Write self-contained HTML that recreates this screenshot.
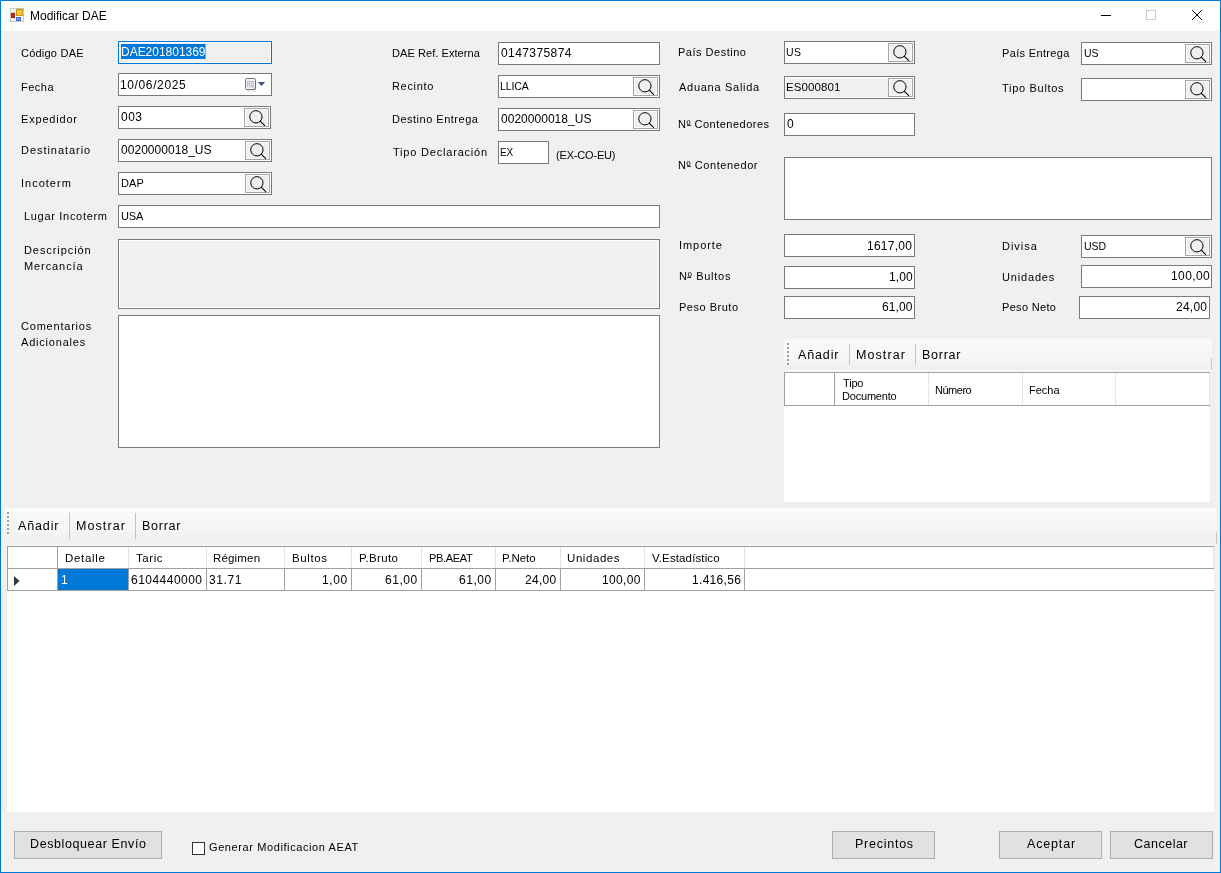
<!DOCTYPE html>
<html><head><meta charset="utf-8"><title>Modificar DAE</title>
<style>
html,body{margin:0;padding:0;width:1221px;height:873px;overflow:hidden;background:#f0f0f0;}
body>div,body>svg{position:absolute;box-sizing:border-box;}
.t{will-change:transform;font-family:"Liberation Sans", sans-serif;line-height:20px;white-space:pre;}
</style></head><body>
<div style="left:0;top:0;width:1221px;height:873px;box-sizing:border-box;border:1px solid #0078d7;background:#f0f0f0"></div>
<div style="left:1px;top:1px;width:1219px;height:30px;background:#fff;"></div>
<svg style="position:absolute;left:9px;top:7px" width="16" height="16" viewBox="0 0 16 16"><rect x="1.5" y="1.5" width="13" height="13" fill="#fff" stroke="#c4c4c4"/><path d="M1 5.5H15M1 10.5H15M5.5 1V15" stroke="#e0e0e0"/><rect x="7.5" y="2.5" width="6" height="6" fill="#f7c93a" stroke="#c9980f"/><rect x="2.5" y="6.5" width="3" height="4" fill="#d0321f" stroke="#9c1b10"/><rect x="7.5" y="10.5" width="4" height="3" fill="#6c9ae6" stroke="#3f6fc4"/></svg>
<div class="t" style="left:30.00px;top:5.84px;font-size:12px;letter-spacing:0.000px;color:#000;font-weight:normal;">Modificar DAE</div>
<div style="left:1101px;top:15px;width:10px;height:1px;background:#000;"></div>
<div style="left:1146px;top:10px;width:10px;height:10px;background:transparent;border:1px solid #cccccc;box-sizing:border-box;width:10px;height:10px;"></div>
<svg style="position:absolute;left:1191px;top:9px" width="12" height="12" viewBox="0 0 12 12"><path d="M1 1L11 11M11 1L1 11" stroke="#000" stroke-width="1"/></svg>
<div class="t" style="left:20.50px;top:43.19px;font-size:11px;letter-spacing:0.222px;color:#000;font-weight:normal;">Código DAE</div>
<div class="t" style="left:20.50px;top:77.19px;font-size:11px;letter-spacing:0.500px;color:#000;font-weight:normal;">Fecha</div>
<div class="t" style="left:20.60px;top:109.19px;font-size:11px;letter-spacing:0.812px;color:#000;font-weight:normal;">Expedidor</div>
<div class="t" style="left:20.60px;top:140.19px;font-size:11px;letter-spacing:0.955px;color:#000;font-weight:normal;">Destinatario</div>
<div class="t" style="left:20.60px;top:173.19px;font-size:11px;letter-spacing:1.000px;color:#000;font-weight:normal;">Incoterm</div>
<div class="t" style="left:24.20px;top:206.19px;font-size:11px;letter-spacing:0.692px;color:#000;font-weight:normal;">Lugar Incoterm</div>
<div class="t" style="left:24.30px;top:240.19px;font-size:11px;letter-spacing:0.920px;color:#000;font-weight:normal;">Descripción</div>
<div class="t" style="left:24.30px;top:256.19px;font-size:11px;letter-spacing:0.912px;color:#000;font-weight:normal;">Mercancía</div>
<div class="t" style="left:20.60px;top:316.19px;font-size:11px;letter-spacing:0.790px;color:#000;font-weight:normal;">Comentarios</div>
<div class="t" style="left:21.30px;top:332.19px;font-size:11px;letter-spacing:0.800px;color:#000;font-weight:normal;">Adicionales</div>
<div class="t" style="left:392.40px;top:43.19px;font-size:11px;letter-spacing:0.067px;color:#000;font-weight:normal;">DAE Ref. Externa</div>
<div class="t" style="left:392.40px;top:76.19px;font-size:11px;letter-spacing:0.667px;color:#000;font-weight:normal;">Recinto</div>
<div class="t" style="left:392.40px;top:109.19px;font-size:11px;letter-spacing:0.500px;color:#000;font-weight:normal;">Destino Entrega</div>
<div class="t" style="left:393.00px;top:142.19px;font-size:11px;letter-spacing:0.800px;color:#000;font-weight:normal;">Tipo Declaración</div>
<div class="t" style="left:556.00px;top:145.19px;font-size:11px;letter-spacing:-0.178px;color:#000;font-weight:normal;">(EX-CO-EU)</div>
<div class="t" style="left:677.70px;top:42.19px;font-size:11px;letter-spacing:0.500px;color:#000;font-weight:normal;">País Destino</div>
<div class="t" style="left:678.90px;top:77.19px;font-size:11px;letter-spacing:0.717px;color:#000;font-weight:normal;">Aduana Salida</div>
<div class="t" style="left:678.40px;top:114.19px;font-size:11px;letter-spacing:0.500px;color:#000;font-weight:normal;">Nº Contenedores</div>
<div style="left:687px;top:125px;width:4px;height:1px;background:#333;"></div>
<div class="t" style="left:677.70px;top:155.19px;font-size:11px;letter-spacing:0.583px;color:#000;font-weight:normal;">Nº Contenedor</div>
<div style="left:687px;top:166px;width:4px;height:1px;background:#333;"></div>
<div class="t" style="left:678.60px;top:235.19px;font-size:11px;letter-spacing:0.933px;color:#000;font-weight:normal;">Importe</div>
<div class="t" style="left:678.60px;top:266.19px;font-size:11px;letter-spacing:0.725px;color:#000;font-weight:normal;">Nº Bultos</div>
<div style="left:687px;top:277px;width:4px;height:1px;background:#333;"></div>
<div class="t" style="left:678.60px;top:297.19px;font-size:11px;letter-spacing:0.511px;color:#000;font-weight:normal;">Peso Bruto</div>
<div class="t" style="left:1001.50px;top:43.19px;font-size:11px;letter-spacing:0.345px;color:#000;font-weight:normal;">País Entrega</div>
<div class="t" style="left:1002.00px;top:78.19px;font-size:11px;letter-spacing:0.700px;color:#000;font-weight:normal;">Tipo Bultos</div>
<div class="t" style="left:1001.60px;top:236.19px;font-size:11px;letter-spacing:0.960px;color:#000;font-weight:normal;">Divisa</div>
<div class="t" style="left:1001.60px;top:267.19px;font-size:11px;letter-spacing:0.829px;color:#000;font-weight:normal;">Unidades</div>
<div class="t" style="left:1001.60px;top:297.19px;font-size:11px;letter-spacing:0.325px;color:#000;font-weight:normal;">Peso Neto</div>
<div style="left:118px;top:41px;width:154px;height:23px;background:#f0f0f0;border:1px solid #0078d7;box-shadow:inset 0 0 0 1px #fff;"></div>
<div style="left:121px;top:44px;width:85px;height:15px;background:#0078d7;"></div>
<div style="left:205px;top:44px;width:1px;height:15px;background:#e8954a;"></div>
<div class="t" style="left:120.70px;top:41.84px;font-size:12px;letter-spacing:-0.018px;color:#fff;font-weight:normal;">DAE201801369</div>
<div style="left:118px;top:73px;width:154px;height:23px;background:#fff;border:1px solid #7a7a7a;"></div>
<div class="t" style="left:119.70px;top:74.84px;font-size:12px;letter-spacing:0.622px;color:#000;font-weight:normal;">10/06/2025</div>
<svg style="position:absolute;left:244px;top:77px" width="24" height="16" viewBox="0 0 24 16"><rect x="2.5" y="13" width="10" height="2" fill="#000" opacity="0.08"/><rect x="1.5" y="1.5" width="10" height="11" rx="1.2" fill="#f3f6fb" stroke="#7a6c6c"/><rect x="3" y="4" width="7" height="6.5" fill="#b9bec8"/><g fill="#fff"><rect x="4" y="5" width="1.2" height="1.2"/><rect x="6" y="5" width="1.2" height="1.2"/><rect x="8" y="5" width="1.2" height="1.2"/><rect x="4" y="7" width="1.2" height="1.2"/><rect x="6" y="7" width="1.2" height="1.2"/><rect x="8" y="7" width="1.2" height="1.2"/><rect x="4" y="9" width="1.2" height="1.2"/><rect x="6" y="9" width="1.2" height="1.2"/></g><path d="M11.5 10.5L9.5 12.5H11.5Z" fill="#7a6c6c"/><path d="M13.8 5H21.2L17.5 9Z" fill="#3f5582"/></svg>
<div style="left:118px;top:106px;width:153px;height:23px;background:#fff;border:1px solid #7a7a7a;"></div>
<div class="t" style="left:121.20px;top:106.84px;font-size:12px;letter-spacing:0.500px;color:#000;font-weight:normal;">003</div>
<div style="left:244px;top:108px;width:25px;height:19px;background:#efefef;border:1px solid #a5a5a5;box-shadow:inset 0 0 0 1px #fbfbfb"></div>
<svg style="position:absolute;left:244px;top:108px" width="25" height="19" viewBox="0 0 25 19"><circle cx="11.9" cy="8.8" r="6.15" fill="none" stroke="#000" stroke-width="1.0"/><line x1="16.2" y1="13.1" x2="21" y2="17.9" stroke="#000" stroke-width="1.05"/></svg>
<div style="left:118px;top:139px;width:154px;height:23px;background:#fff;border:1px solid #7a7a7a;"></div>
<div class="t" style="left:121.40px;top:139.84px;font-size:12px;letter-spacing:0.042px;color:#000;font-weight:normal;">0020000018_US</div>
<div style="left:245px;top:141px;width:25px;height:19px;background:#efefef;border:1px solid #a5a5a5;box-shadow:inset 0 0 0 1px #fbfbfb"></div>
<svg style="position:absolute;left:245px;top:141px" width="25" height="19" viewBox="0 0 25 19"><circle cx="11.9" cy="8.8" r="6.15" fill="none" stroke="#000" stroke-width="1.0"/><line x1="16.2" y1="13.1" x2="21" y2="17.9" stroke="#000" stroke-width="1.05"/></svg>
<div style="left:118px;top:172px;width:154px;height:23px;background:#fff;border:1px solid #7a7a7a;"></div>
<div class="t" style="left:120.50px;top:173.19px;font-size:11px;letter-spacing:0.150px;color:#000;font-weight:normal;">DAP</div>
<div style="left:245px;top:174px;width:25px;height:19px;background:#efefef;border:1px solid #a5a5a5;box-shadow:inset 0 0 0 1px #fbfbfb"></div>
<svg style="position:absolute;left:245px;top:174px" width="25" height="19" viewBox="0 0 25 19"><circle cx="11.9" cy="8.8" r="6.15" fill="none" stroke="#000" stroke-width="1.0"/><line x1="16.2" y1="13.1" x2="21" y2="17.9" stroke="#000" stroke-width="1.05"/></svg>
<div style="left:118px;top:205px;width:542px;height:23px;background:#fff;border:1px solid #7a7a7a;"></div>
<div class="t" style="left:120.50px;top:206.19px;font-size:11px;letter-spacing:-0.100px;color:#000;font-weight:normal;">USA</div>
<div style="left:118px;top:239px;width:542px;height:70px;background:#f0f0f0;border:1px solid #7a7a7a;box-shadow:inset 0 0 0 1px #fff;"></div>
<div style="left:118px;top:315px;width:542px;height:133px;background:#fff;border:1px solid #7a7a7a;"></div>
<div style="left:498px;top:42px;width:162px;height:23px;background:#fff;border:1px solid #7a7a7a;"></div>
<div class="t" style="left:501.00px;top:42.84px;font-size:12px;letter-spacing:0.411px;color:#000;font-weight:normal;">0147375874</div>
<div style="left:498px;top:75px;width:162px;height:23px;background:#fff;border:1px solid #7a7a7a;"></div>
<div class="t" style="left:500.40px;top:76.36px;font-size:10.5px;letter-spacing:-0.125px;color:#000;font-weight:normal;">LLICA</div>
<div style="left:633px;top:77px;width:25px;height:19px;background:#efefef;border:1px solid #a5a5a5;box-shadow:inset 0 0 0 1px #fbfbfb"></div>
<svg style="position:absolute;left:633px;top:77px" width="25" height="19" viewBox="0 0 25 19"><circle cx="11.9" cy="8.8" r="6.15" fill="none" stroke="#000" stroke-width="1.0"/><line x1="16.2" y1="13.1" x2="21" y2="17.9" stroke="#000" stroke-width="1.05"/></svg>
<div style="left:498px;top:108px;width:162px;height:23px;background:#fff;border:1px solid #7a7a7a;"></div>
<div class="t" style="left:501.00px;top:108.84px;font-size:12px;letter-spacing:0.025px;color:#000;font-weight:normal;">0020000018_US</div>
<div style="left:633px;top:110px;width:25px;height:19px;background:#efefef;border:1px solid #a5a5a5;box-shadow:inset 0 0 0 1px #fbfbfb"></div>
<svg style="position:absolute;left:633px;top:110px" width="25" height="19" viewBox="0 0 25 19"><circle cx="11.9" cy="8.8" r="6.15" fill="none" stroke="#000" stroke-width="1.0"/><line x1="16.2" y1="13.1" x2="21" y2="17.9" stroke="#000" stroke-width="1.05"/></svg>
<div style="left:498px;top:141px;width:51px;height:23px;background:#fff;border:1px solid #7a7a7a;"></div>
<div class="t" style="left:500.40px;top:142.53px;font-size:10px;letter-spacing:-0.200px;color:#000;font-weight:normal;">EX</div>
<div style="left:784px;top:41px;width:131px;height:23px;background:#fff;border:1px solid #7a7a7a;"></div>
<div class="t" style="left:786.40px;top:42.36px;font-size:10.5px;letter-spacing:0.400px;color:#000;font-weight:normal;">US</div>
<div style="left:888px;top:43px;width:25px;height:19px;background:#efefef;border:1px solid #a5a5a5;box-shadow:inset 0 0 0 1px #fbfbfb"></div>
<svg style="position:absolute;left:888px;top:43px" width="25" height="19" viewBox="0 0 25 19"><circle cx="11.9" cy="8.8" r="6.15" fill="none" stroke="#000" stroke-width="1.0"/><line x1="16.2" y1="13.1" x2="21" y2="17.9" stroke="#000" stroke-width="1.05"/></svg>
<div style="left:784px;top:76px;width:131px;height:23px;background:#f0f0f0;border:1px solid #7a7a7a;box-shadow:inset 0 0 0 1px #fff;"></div>
<div class="t" style="left:786.40px;top:77.02px;font-size:11.5px;letter-spacing:0.100px;color:#000;font-weight:normal;">ES000801</div>
<div style="left:888px;top:78px;width:25px;height:19px;background:#efefef;border:1px solid #a5a5a5;box-shadow:inset 0 0 0 1px #fbfbfb"></div>
<svg style="position:absolute;left:888px;top:78px" width="25" height="19" viewBox="0 0 25 19"><circle cx="11.9" cy="8.8" r="6.15" fill="none" stroke="#000" stroke-width="1.0"/><line x1="16.2" y1="13.1" x2="21" y2="17.9" stroke="#000" stroke-width="1.05"/></svg>
<div style="left:784px;top:113px;width:131px;height:23px;background:#fff;border:1px solid #7a7a7a;"></div>
<div class="t" style="left:787.40px;top:113.84px;font-size:12px;letter-spacing:0.000px;color:#000;font-weight:normal;">0</div>
<div style="left:784px;top:157px;width:428px;height:63px;background:#fff;border:1px solid #7a7a7a;"></div>
<div style="left:784px;top:234px;width:131px;height:23px;background:#fff;border:1px solid #7a7a7a;"></div>
<div class="t" style="left:867.00px;top:235.84px;font-size:12px;letter-spacing:0.250px;color:#000;font-weight:normal;">1617,00</div>
<div style="left:784px;top:266px;width:131px;height:23px;background:#fff;border:1px solid #7a7a7a;"></div>
<div class="t" style="left:889.00px;top:266.84px;font-size:12px;letter-spacing:0.100px;color:#000;font-weight:normal;">1,00</div>
<div style="left:784px;top:296px;width:131px;height:23px;background:#fff;border:1px solid #7a7a7a;"></div>
<div class="t" style="left:882.00px;top:296.84px;font-size:12px;letter-spacing:0.125px;color:#000;font-weight:normal;">61,00</div>
<div style="left:1081px;top:42px;width:131px;height:23px;background:#fff;border:1px solid #7a7a7a;"></div>
<div class="t" style="left:1084.00px;top:43.36px;font-size:10.5px;letter-spacing:0.000px;color:#000;font-weight:normal;">US</div>
<div style="left:1185px;top:44px;width:25px;height:19px;background:#efefef;border:1px solid #a5a5a5;box-shadow:inset 0 0 0 1px #fbfbfb"></div>
<svg style="position:absolute;left:1185px;top:44px" width="25" height="19" viewBox="0 0 25 19"><circle cx="11.9" cy="8.8" r="6.15" fill="none" stroke="#000" stroke-width="1.0"/><line x1="16.2" y1="13.1" x2="21" y2="17.9" stroke="#000" stroke-width="1.05"/></svg>
<div style="left:1081px;top:78px;width:131px;height:23px;background:#fff;border:1px solid #7a7a7a;"></div>
<div style="left:1185px;top:80px;width:25px;height:19px;background:#efefef;border:1px solid #a5a5a5;box-shadow:inset 0 0 0 1px #fbfbfb"></div>
<svg style="position:absolute;left:1185px;top:80px" width="25" height="19" viewBox="0 0 25 19"><circle cx="11.9" cy="8.8" r="6.15" fill="none" stroke="#000" stroke-width="1.0"/><line x1="16.2" y1="13.1" x2="21" y2="17.9" stroke="#000" stroke-width="1.05"/></svg>
<div style="left:1081px;top:235px;width:131px;height:23px;background:#fff;border:1px solid #7a7a7a;"></div>
<div class="t" style="left:1084.00px;top:236.36px;font-size:10.5px;letter-spacing:0.000px;color:#000;font-weight:normal;">USD</div>
<div style="left:1185px;top:237px;width:25px;height:19px;background:#efefef;border:1px solid #a5a5a5;box-shadow:inset 0 0 0 1px #fbfbfb"></div>
<svg style="position:absolute;left:1185px;top:237px" width="25" height="19" viewBox="0 0 25 19"><circle cx="11.9" cy="8.8" r="6.15" fill="none" stroke="#000" stroke-width="1.0"/><line x1="16.2" y1="13.1" x2="21" y2="17.9" stroke="#000" stroke-width="1.05"/></svg>
<div style="left:1081px;top:265px;width:131px;height:23px;background:#fff;border:1px solid #7a7a7a;"></div>
<div class="t" style="left:1171.00px;top:265.84px;font-size:12px;letter-spacing:0.400px;color:#000;font-weight:normal;">100,00</div>
<div style="left:1079px;top:296px;width:131px;height:23px;background:#fff;border:1px solid #7a7a7a;"></div>
<div class="t" style="left:1176.00px;top:296.84px;font-size:12px;letter-spacing:0.250px;color:#000;font-weight:normal;">24,00</div>
<div style="left:784px;top:339px;width:428px;height:33px;border-radius:3px 3px 0 0;background:linear-gradient(#fbfbfb 0px,#f5f5f5 18px,#efefef 30px,#f6f6f6 31px,#f6f6f6 33px)"></div>
<div style="left:1211px;top:358px;width:1px;height:12px;background:#a8a8a8;opacity:0.6;"></div>
<div style="left:787px;top:343px;width:2px;height:2px;background:#a0a0a0;"></div>
<div style="left:787px;top:347px;width:2px;height:2px;background:#a0a0a0;"></div>
<div style="left:787px;top:351px;width:2px;height:2px;background:#a0a0a0;"></div>
<div style="left:787px;top:355px;width:2px;height:2px;background:#a0a0a0;"></div>
<div style="left:787px;top:359px;width:2px;height:2px;background:#a0a0a0;"></div>
<div style="left:787px;top:363px;width:2px;height:2px;background:#a0a0a0;"></div>
<div style="left:849px;top:344px;width:1px;height:21px;background:#c4c4c4;"></div>
<div style="left:915px;top:344px;width:1px;height:21px;background:#c4c4c4;"></div>
<div class="t" style="left:798.30px;top:344.67px;font-size:12.5px;letter-spacing:0.860px;color:#000;font-weight:normal;">Añadir</div>
<div class="t" style="left:856.30px;top:344.67px;font-size:12.5px;letter-spacing:1.083px;color:#000;font-weight:normal;">Mostrar</div>
<div class="t" style="left:922.30px;top:344.67px;font-size:12.5px;letter-spacing:0.740px;color:#000;font-weight:normal;">Borrar</div>
<div style="left:784px;top:372px;width:426px;height:130px;background:#fff;"></div>
<div style="left:784px;top:372px;width:426px;height:1px;background:#a0a0a0;"></div>
<div style="left:784px;top:405px;width:426px;height:1px;background:#a0a0a0;"></div>
<div style="left:784px;top:372px;width:1px;height:34px;background:#a0a0a0;"></div>
<div style="left:1209px;top:373px;width:1px;height:32px;background:#e5e5e5;"></div>
<div style="left:834px;top:373px;width:1px;height:32px;background:#a0a0a0;"></div>
<div style="left:928px;top:373px;width:1px;height:32px;background:#e5e5e5;"></div>
<div style="left:1022px;top:373px;width:1px;height:32px;background:#e5e5e5;"></div>
<div style="left:1115px;top:373px;width:1px;height:32px;background:#e5e5e5;"></div>
<div class="t" style="left:842.60px;top:373.19px;font-size:11px;letter-spacing:-0.167px;color:#000;font-weight:normal;">Tipo</div>
<div class="t" style="left:841.60px;top:386.19px;font-size:11px;letter-spacing:-0.200px;color:#000;font-weight:normal;">Documento</div>
<div class="t" style="left:935.40px;top:380.19px;font-size:11px;letter-spacing:-0.480px;color:#000;font-weight:normal;">Número</div>
<div class="t" style="left:1029.30px;top:380.19px;font-size:11px;letter-spacing:0.000px;color:#000;font-weight:normal;">Fecha</div>
<div style="left:4px;top:508px;width:1213px;height:38px;border-radius:3px 3px 0 0;background:linear-gradient(#fbfbfb 0px,#f5f5f5 21px,#efefef 35px,#f6f6f6 36px,#f6f6f6 38px)"></div>
<div style="left:1216px;top:532px;width:1px;height:12px;background:#a8a8a8;opacity:0.6;"></div>
<div style="left:7px;top:512px;width:2px;height:2px;background:#a0a0a0;"></div>
<div style="left:7px;top:516px;width:2px;height:2px;background:#a0a0a0;"></div>
<div style="left:7px;top:520px;width:2px;height:2px;background:#a0a0a0;"></div>
<div style="left:7px;top:524px;width:2px;height:2px;background:#a0a0a0;"></div>
<div style="left:7px;top:528px;width:2px;height:2px;background:#a0a0a0;"></div>
<div style="left:7px;top:532px;width:2px;height:2px;background:#a0a0a0;"></div>
<div style="left:69px;top:513px;width:1px;height:26px;background:#c4c4c4;"></div>
<div style="left:135px;top:513px;width:1px;height:26px;background:#c4c4c4;"></div>
<div class="t" style="left:18.30px;top:515.67px;font-size:12.5px;letter-spacing:0.860px;color:#000;font-weight:normal;">Añadir</div>
<div class="t" style="left:76.30px;top:515.67px;font-size:12.5px;letter-spacing:1.083px;color:#000;font-weight:normal;">Mostrar</div>
<div class="t" style="left:142.30px;top:515.67px;font-size:12.5px;letter-spacing:0.740px;color:#000;font-weight:normal;">Borrar</div>
<div style="left:7px;top:546px;width:1207px;height:266px;background:#fff;"></div>
<div style="left:7px;top:546px;width:1207px;height:1px;background:#a0a0a0;"></div>
<div style="left:1213px;top:547px;width:1px;height:21px;background:#e5e5e5;"></div>
<div style="left:7px;top:546px;width:1px;height:45px;background:#a0a0a0;"></div>
<div style="left:7px;top:568px;width:1207px;height:1px;background:#a0a0a0;"></div>
<div style="left:7px;top:590px;width:1207px;height:1px;background:#a0a0a0;"></div>
<div style="left:57px;top:547px;width:1px;height:21px;background:#a0a0a0;"></div>
<div style="left:57px;top:569px;width:1px;height:21px;background:#a0a0a0;"></div>
<div style="left:128px;top:547px;width:1px;height:21px;background:#e5e5e5;"></div>
<div style="left:128px;top:569px;width:1px;height:21px;background:#a0a0a0;"></div>
<div style="left:206px;top:547px;width:1px;height:21px;background:#e5e5e5;"></div>
<div style="left:206px;top:569px;width:1px;height:21px;background:#a0a0a0;"></div>
<div style="left:284px;top:547px;width:1px;height:21px;background:#e5e5e5;"></div>
<div style="left:284px;top:569px;width:1px;height:21px;background:#a0a0a0;"></div>
<div style="left:351px;top:547px;width:1px;height:21px;background:#e5e5e5;"></div>
<div style="left:351px;top:569px;width:1px;height:21px;background:#a0a0a0;"></div>
<div style="left:421px;top:547px;width:1px;height:21px;background:#e5e5e5;"></div>
<div style="left:421px;top:569px;width:1px;height:21px;background:#a0a0a0;"></div>
<div style="left:495px;top:547px;width:1px;height:21px;background:#e5e5e5;"></div>
<div style="left:495px;top:569px;width:1px;height:21px;background:#a0a0a0;"></div>
<div style="left:560px;top:547px;width:1px;height:21px;background:#e5e5e5;"></div>
<div style="left:560px;top:569px;width:1px;height:21px;background:#a0a0a0;"></div>
<div style="left:644px;top:547px;width:1px;height:21px;background:#e5e5e5;"></div>
<div style="left:644px;top:569px;width:1px;height:21px;background:#a0a0a0;"></div>
<div style="left:744px;top:547px;width:1px;height:21px;background:#e5e5e5;"></div>
<div style="left:744px;top:569px;width:1px;height:21px;background:#a0a0a0;"></div>
<div class="t" style="left:64.70px;top:548.02px;font-size:11.5px;letter-spacing:0.667px;color:#000;font-weight:normal;">Detalle</div>
<div class="t" style="left:136.00px;top:548.02px;font-size:11.5px;letter-spacing:0.550px;color:#000;font-weight:normal;">Taric</div>
<div class="t" style="left:213.30px;top:548.02px;font-size:11.5px;letter-spacing:0.167px;color:#000;font-weight:normal;">Régimen</div>
<div class="t" style="left:291.60px;top:548.02px;font-size:11.5px;letter-spacing:0.600px;color:#000;font-weight:normal;">Bultos</div>
<div class="t" style="left:358.70px;top:548.02px;font-size:11.5px;letter-spacing:0.333px;color:#000;font-weight:normal;">P.Bruto</div>
<div class="t" style="left:428.70px;top:548.19px;font-size:11px;letter-spacing:-0.333px;color:#000;font-weight:normal;">PB.AEAT</div>
<div class="t" style="left:502.40px;top:548.02px;font-size:11.5px;letter-spacing:0.000px;color:#000;font-weight:normal;">P.Neto</div>
<div class="t" style="left:567.30px;top:548.02px;font-size:11.5px;letter-spacing:0.571px;color:#000;font-weight:normal;">Unidades</div>
<div class="t" style="left:651.80px;top:548.02px;font-size:11.5px;letter-spacing:0.133px;color:#000;font-weight:normal;">V.Estadístico</div>
<div style="left:58px;top:569px;width:70px;height:21px;background:#0078d7;"></div>
<div class="t" style="left:61.00px;top:569.84px;font-size:12px;letter-spacing:0.000px;color:#fff;font-weight:normal;">1</div>
<div class="t" style="left:131.20px;top:569.84px;font-size:12px;letter-spacing:0.478px;color:#000;font-weight:normal;">6104440000</div>
<div class="t" style="left:209.00px;top:569.84px;font-size:12px;letter-spacing:0.575px;color:#000;font-weight:normal;">31.71</div>
<div class="t" style="left:322.20px;top:569.84px;font-size:12px;letter-spacing:0.633px;color:#000;font-weight:normal;">1,00</div>
<div class="t" style="left:385.20px;top:569.84px;font-size:12px;letter-spacing:0.550px;color:#000;font-weight:normal;">61,00</div>
<div class="t" style="left:458.90px;top:569.84px;font-size:12px;letter-spacing:0.550px;color:#000;font-weight:normal;">61,00</div>
<div class="t" style="left:525.20px;top:569.84px;font-size:12px;letter-spacing:0.300px;color:#000;font-weight:normal;">24,00</div>
<div class="t" style="left:602.00px;top:569.84px;font-size:12px;letter-spacing:0.360px;color:#000;font-weight:normal;">100,00</div>
<div class="t" style="left:692.00px;top:569.84px;font-size:12px;letter-spacing:0.314px;color:#000;font-weight:normal;">1.416,56</div>
<svg style="position:absolute;left:14px;top:576px" width="6" height="10" viewBox="0 0 6 10"><path d="M0 0L5.5 5L0 10Z" fill="#333"/></svg>
<div style="left:14px;top:831px;width:148px;height:28px;background:#e1e1e1;border:1px solid #adadad;"></div>
<div class="t" style="left:30.10px;top:833.67px;font-size:12.5px;letter-spacing:0.600px;color:#000;font-weight:normal;">Desbloquear Envío</div>
<div style="left:192px;top:842px;width:13px;height:13px;background:#fff;border:1px solid #333;"></div>
<div class="t" style="left:209.00px;top:837.19px;font-size:11px;letter-spacing:0.600px;color:#000;font-weight:normal;">Generar Modificacion AEAT</div>
<div style="left:832px;top:831px;width:103px;height:28px;background:#e1e1e1;border:1px solid #adadad;"></div>
<div class="t" style="left:855.00px;top:833.67px;font-size:12.5px;letter-spacing:0.750px;color:#000;font-weight:normal;">Precintos</div>
<div style="left:999px;top:831px;width:103px;height:28px;background:#e1e1e1;border:1px solid #adadad;"></div>
<div class="t" style="left:1026.90px;top:833.67px;font-size:12.5px;letter-spacing:0.833px;color:#000;font-weight:normal;">Aceptar</div>
<div style="left:1110px;top:831px;width:103px;height:28px;background:#e1e1e1;border:1px solid #adadad;"></div>
<div class="t" style="left:1134.30px;top:833.67px;font-size:12.5px;letter-spacing:0.500px;color:#000;font-weight:normal;">Cancelar</div>
</body></html>
